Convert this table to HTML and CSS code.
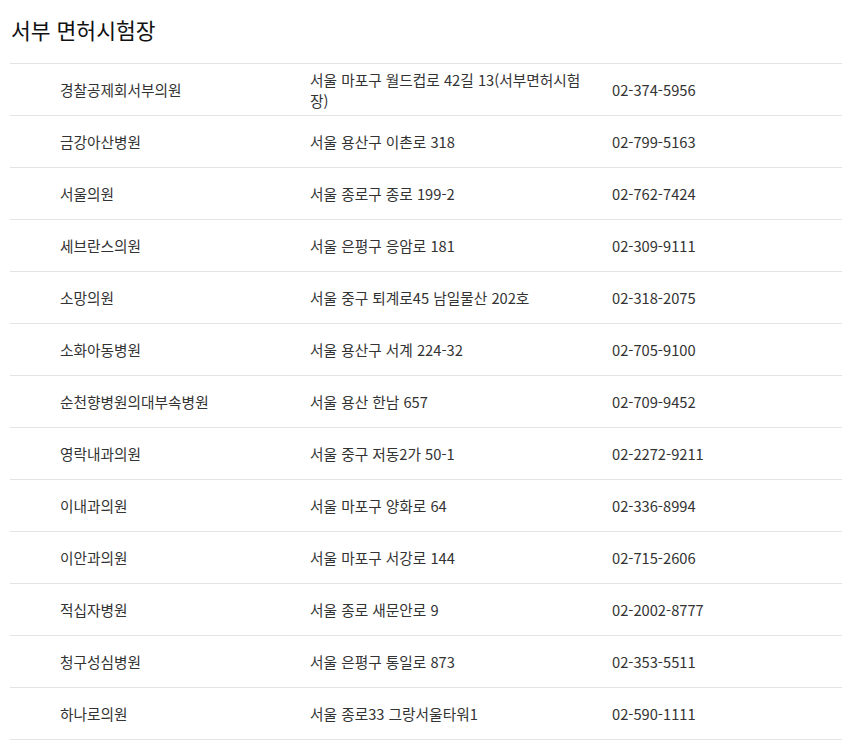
FILE: index.html
```html
<!DOCTYPE html>
<html lang="ko">
<head>
<meta charset="utf-8">
<link rel="stylesheet" href="styles.css">
</head>
<body>
<div class="wrap">
  <h2 class="title">서부 면허시험장</h2>
  <div class="table">
    <div class="row"><div class="c1">경찰공제회서부의원</div><div class="c2">서울 마포구 월드컵로 42길 13(서부면허시험장)</div><div class="c3">02-374-5956</div></div>
    <div class="row"><div class="c1">금강아산병원</div><div class="c2">서울 용산구 이촌로 318</div><div class="c3">02-799-5163</div></div>
    <div class="row"><div class="c1">서울의원</div><div class="c2">서울 종로구 종로 199-2</div><div class="c3">02-762-7424</div></div>
    <div class="row"><div class="c1">세브란스의원</div><div class="c2">서울 은평구 응암로 181</div><div class="c3">02-309-9111</div></div>
    <div class="row"><div class="c1">소망의원</div><div class="c2">서울 중구 퇴계로45 남일물산 202호</div><div class="c3">02-318-2075</div></div>
    <div class="row"><div class="c1">소화아동병원</div><div class="c2">서울 용산구 서계 224-32</div><div class="c3">02-705-9100</div></div>
    <div class="row"><div class="c1">순천향병원의대부속병원</div><div class="c2">서울 용산 한남 657</div><div class="c3">02-709-9452</div></div>
    <div class="row"><div class="c1">영락내과의원</div><div class="c2">서울 중구 저동2가 50-1</div><div class="c3">02-2272-9211</div></div>
    <div class="row"><div class="c1">이내과의원</div><div class="c2">서울 마포구 양화로 64</div><div class="c3">02-336-8994</div></div>
    <div class="row"><div class="c1">이안과의원</div><div class="c2">서울 마포구 서강로 144</div><div class="c3">02-715-2606</div></div>
    <div class="row"><div class="c1">적십자병원</div><div class="c2">서울 종로 새문안로 9</div><div class="c3">02-2002-8777</div></div>
    <div class="row"><div class="c1">청구성심병원</div><div class="c2">서울 은평구 통일로 873</div><div class="c3">02-353-5511</div></div>
    <div class="row"><div class="c1">하나로의원</div><div class="c2">서울 종로33 그랑서울타워1</div><div class="c3">02-590-1111</div></div>
  </div>
</div>
</body>
</html>
```
FILE: styles.css
```css
html, body {
  margin: 0;
  padding: 0;
  background: #fff;
}
body {
  font-family: "Noto Sans CJK KR", "Noto Sans", sans-serif;
  color: #333;
}
.wrap {
  padding: 0 15px 0 10px;
}
.title {
  margin: 0 0 18px 1px;
  padding-top: 15px;
  font-size: 21.5px;
  line-height: 30px;
  font-weight: 400;
  color: #111;
}
.table {
  border-top: 1px solid #e4e4e4;
}
.row {
  display: grid;
  grid-template-columns: 290px 302px 1fr;
  height: 51px;
  border-bottom: 1px solid #e4e4e4;
  align-items: center;
  font-size: 14.7px;
  line-height: 21px;
}
.c1 {
  padding-left: 50px;
}
.c2 {
  padding: 0 20px 0 10px;
}
.c3 {
  padding-left: 10px;
}
```
